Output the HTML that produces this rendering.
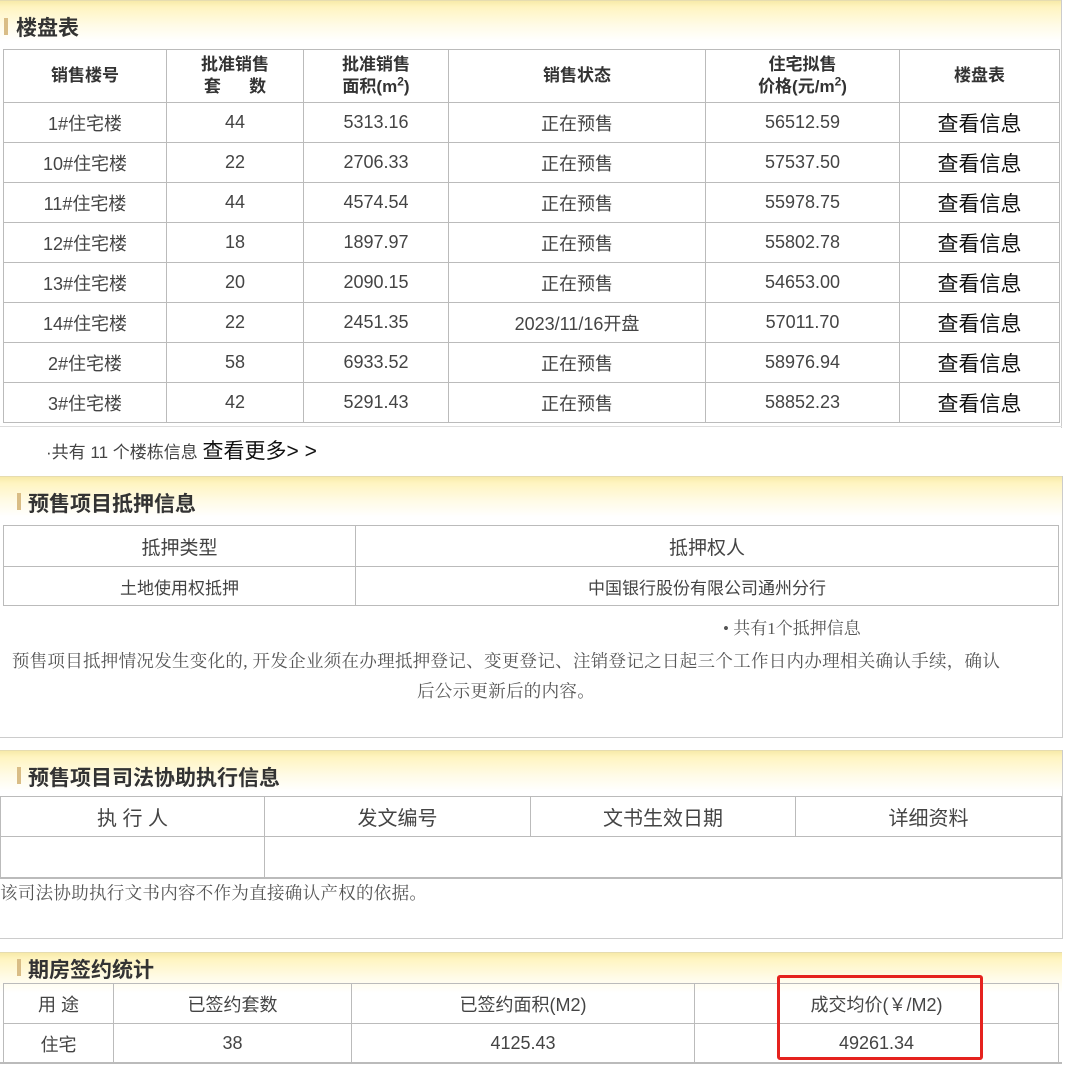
<!DOCTYPE html>
<html><head><meta charset="utf-8"><style>
body{margin:0;width:1065px;height:1066px;position:relative;background:#fff;overflow:hidden;font-family:"Liberation Sans","Noto Sans CJK SC",sans-serif;color:#333}
.a{position:absolute}
.hd{position:absolute;left:0;width:1062px;background:linear-gradient(#f7eaa9 0px,#fff4c0 6px,#fffbe6 24px,#fff 40px);border-top:1px solid #e6dcb0}
.ttl{position:absolute;font-weight:bold;font-size:21px;color:#333;white-space:nowrap}
.mk{position:absolute;width:4px;height:17px;background:#d9bd86}
table{position:absolute;border-collapse:collapse;table-layout:fixed}
td{border:1px solid #bbb;text-align:center;padding:0;font-size:18px;color:#444}
.h td{font-weight:bold;font-size:17px;line-height:22px;color:#333}
.q{font-size:21px;color:#111}
.box{position:absolute;border-right:1px solid #ccc;border-bottom:1px solid #ccc}
.ser{font-family:"Liberation Serif","Noto Serif CJK SC",serif;color:#555}
</style></head><body>

<div class="hd" style="top:0;height:45px"></div>
<div class="a" style="left:1061px;top:0;width:1px;height:428px;background:#ccc"></div>
<div class="mk" style="left:4px;top:18px"></div>
<div class="ttl" style="left:16px;top:12px">楼盘表</div>
<table style="left:3px;top:49px;width:1056px">
<colgroup><col style="width:163px"><col style="width:137px"><col style="width:145px"><col style="width:257px"><col style="width:194px"><col style="width:160px"></colgroup>
<tr class="h" style="height:53px"><td>销售楼号</td><td>批准销售<br>套&nbsp;&nbsp;&nbsp;&nbsp;&nbsp;&nbsp;数</td><td>批准销售<br>面积(m<sup style="font-size:12px;line-height:0">2</sup>)</td><td>销售状态</td><td>住宅拟售<br>价格(元/m<sup style="font-size:12px;line-height:0">2</sup>)</td><td>楼盘表</td></tr>
<tr style="height:40px"><td>1#住宅楼</td><td>44</td><td>5313.16</td><td>正在预售</td><td>56512.59</td><td class="q">查看信息</td></tr>
<tr style="height:40px"><td>10#住宅楼</td><td>22</td><td>2706.33</td><td>正在预售</td><td>57537.50</td><td class="q">查看信息</td></tr>
<tr style="height:40px"><td>11#住宅楼</td><td>44</td><td>4574.54</td><td>正在预售</td><td>55978.75</td><td class="q">查看信息</td></tr>
<tr style="height:40px"><td>12#住宅楼</td><td>18</td><td>1897.97</td><td>正在预售</td><td>55802.78</td><td class="q">查看信息</td></tr>
<tr style="height:40px"><td>13#住宅楼</td><td>20</td><td>2090.15</td><td>正在预售</td><td>54653.00</td><td class="q">查看信息</td></tr>
<tr style="height:40px"><td>14#住宅楼</td><td>22</td><td>2451.35</td><td>2023/11/16开盘</td><td>57011.70</td><td class="q">查看信息</td></tr>
<tr style="height:40px"><td>2#住宅楼</td><td>58</td><td>6933.52</td><td>正在预售</td><td>58976.94</td><td class="q">查看信息</td></tr>
<tr style="height:40px"><td>3#住宅楼</td><td>42</td><td>5291.43</td><td>正在预售</td><td>58852.23</td><td class="q">查看信息</td></tr>
</table>
<div class="a" style="left:0;top:426px;width:1062px;height:1px;background:#ddd"></div>
<div class="a" style="left:46px;top:435px;font-size:17px;color:#444;white-space:nowrap">·共有 11 个楼栋信息 <span style="font-size:21px;color:#111">查看更多&gt; &gt;</span></div>

<div class="hd" style="top:476px;height:45px"></div>
<div class="box" style="left:0;top:476px;width:1062px;height:261px"></div>
<div class="mk" style="left:17px;top:493px"></div>
<div class="ttl" style="left:28px;top:488px">预售项目抵押信息</div>
<table style="left:3px;top:525px;width:1056px">
<colgroup><col style="width:352px"><col></colgroup>
<tr style="height:41px"><td style="font-size:19px">抵押类型</td><td style="font-size:19px">抵押权人</td></tr>
<tr style="height:39px"><td style="font-size:17px">土地使用权抵押</td><td style="font-size:17px">中国银行股份有限公司通州分行</td></tr>
</table>
<div class="a ser" style="left:723px;top:614px;font-size:17px;white-space:nowrap">• 共有1个抵押信息</div>
<div class="a ser" style="left:4px;top:646px;width:1004px;font-size:17.5px;line-height:30px;text-align:center;letter-spacing:0.3px">预售项目抵押情况发生变化的, 开发企业须在办理抵押登记、变更登记、注销登记之日起三个工作日内办理相关确认手续，确认<br>后公示更新后的内容。</div>

<div class="hd" style="top:750px;height:45px"></div>
<div class="box" style="left:0;top:750px;width:1062px;height:188px"></div>
<div class="mk" style="left:17px;top:767px"></div>
<div class="ttl" style="left:28px;top:762px">预售项目司法协助执行信息</div>
<table style="left:0;top:796px;width:1062px">
<colgroup><col style="width:264px"><col style="width:266px"><col style="width:265px"><col></colgroup>
<tr style="height:40px"><td style="font-size:20px">执 行 人</td><td style="font-size:20px">发文编号</td><td style="font-size:20px">文书生效日期</td><td style="font-size:20px">详细资料</td></tr>
<tr style="height:41px"><td style="border-bottom:2px solid #bbb"></td><td colspan="3" style="border-bottom:2px solid #bbb"></td></tr>
</table>
<div class="a ser" style="left:0;top:880px;font-size:17.5px;white-space:nowrap;letter-spacing:0.3px">该司法协助执行文书内容不作为直接确认产权的依据。</div>

<div class="hd" style="top:952px;height:40px"></div>
<div class="mk" style="left:17px;top:959px"></div>
<div class="ttl" style="left:28px;top:954px">期房签约统计</div>
<table style="left:3px;top:983px;width:1056px">
<colgroup><col style="width:110px"><col style="width:238px"><col style="width:343px"><col></colgroup>
<tr style="height:40px"><td>用 途</td><td>已签约套数</td><td>已签约面积(M2)</td><td>成交均价(￥/M2)</td></tr>
<tr style="height:40px"><td>住宅</td><td>38</td><td>4125.43</td><td>49261.34</td></tr>
</table>
<div class="a" style="left:0;top:1062px;width:1062px;height:2px;background:#bbb"></div>
<div class="a" style="left:777px;top:975px;width:200px;height:79px;border:3px solid #e5221e;border-radius:3px"></div>
</body></html>
